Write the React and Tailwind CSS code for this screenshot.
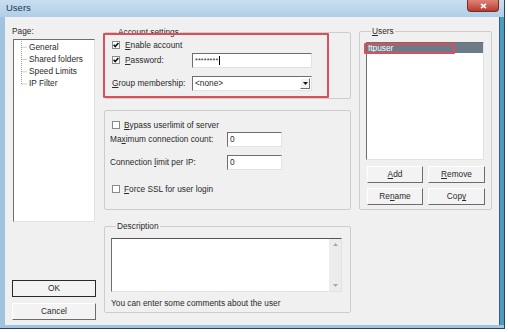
import React from 'react';

// Sunken edge used by text boxes, list boxes and the page tree.
const SUNKEN = 'border border-t-[#6e6e6e] border-l-[#6e6e6e] border-r-[#e2e2e2] border-b-[#e2e2e2]';
const RAISED = 'border border-t-[#ffffff] border-l-[#ffffff] border-r-[#6c6c6c] border-b-[#6c6c6c]';

function Check({ checked }) {
  return (
    <span className="w-[8px] h-[8px] shrink-0 flex items-center justify-center bg-white border border-[#8a8a8a]">
      {checked && (
        <svg width="6" height="6" viewBox="0 0 6 6">
          <path d="M0.6 2.8 L2.2 4.6 L5.4 0.9" stroke="#111" strokeWidth="1.6" fill="none" />
        </svg>
      )}
    </span>
  );
}

function Btn({ children, className = '' }) {
  return (
    <div className={`h-[17px] flex items-center justify-center bg-[#f3f3f3] ${RAISED} ${className}`}>
      {children}
    </div>
  );
}

function Legend({ children }) {
  return <legend className="ml-[5px] px-[1px] leading-[10px]">{children}</legend>;
}

export default function App() {
  return (
    <div className="w-[508px] h-[332px] bg-white font-['Liberation_Sans',Arial,sans-serif] text-[8.3px] leading-none text-[#2a2a2a]">
      <div className="w-[505px] h-[329px] flex flex-col border-r border-b border-[#2e4254] bg-[#a6c6e2]">
        {/* title bar */}
        <div className="h-[17px] shrink-0 flex items-start justify-between pl-[6px] pr-[5px] bg-gradient-to-b from-[#c9def0] to-[#b0cee7]">
          <span className="mt-[3px] text-[9.5px] leading-[10px] text-[#1c3a58]">Users</span>
          <div className="w-[32px] h-[12px] flex items-center justify-center rounded-b-[4px] border border-t-0 border-[#7a2c25] bg-gradient-to-b from-[#de8377] to-[#b73a2e]">
            <svg width="7" height="6" viewBox="0 0 7 6">
              <path d="M1 0.8 L6 5.2 M6 0.8 L1 5.2" stroke="#fff" strokeWidth="1.6" />
            </svg>
          </div>
        </div>

        <div className="flex-1 flex min-h-0">
          <div className="w-[5px] bg-[#a2c3df]" />
          <div className="flex-1 flex bg-[#f0f0f0] pl-[7px]">
            {/* left column */}
            <div className="w-[84px] flex flex-col pt-[9px] pb-[5px]">
              <div className="h-[10px] leading-[10px]">Page:</div>
              <div className={`mt-[3px] mx-[1px] h-[183px] bg-white ${SUNKEN} pl-[7px] pt-[0.5px]`}>
                <div className="flex">
                  <svg width="8" height="50" viewBox="0 0 8 50" className="shrink-0">
                    <path d="M0.5 0 V43 M0.5 6.2 H6 M0.5 18.5 H6 M0.5 30.8 H6 M0.5 43 H6"
                      stroke="#9a9a9a" strokeWidth="1" strokeDasharray="1 1" fill="none" />
                  </svg>
                  <div className="flex flex-col">
                    {['General', 'Shared folders', 'Speed Limits', 'IP Filter'].map(p => (
                      <div key={p} className="h-[12.3px] leading-[12.3px] whitespace-nowrap">{p}</div>
                    ))}
                  </div>
                </div>
              </div>
              <div className="mt-auto h-[17px] flex items-center justify-center bg-[#f3f3f3] border border-[#2a2a2a]">
                OK
              </div>
              <Btn className="mt-[6px]">Cancel</Btn>
            </div>

            {/* middle column */}
            <div className="relative ml-[8px] w-[247px] flex flex-col">
              <fieldset className="mt-[10px] border border-[#cdcdcd] rounded-[2px] pl-[7px] pt-[3px] pb-[7px]">
                <Legend>Account settings</Legend>
                <div className="h-[10px] flex items-center gap-[5px]">
                  <Check checked />
                  <span><u>E</u>nable account</span>
                </div>
                <div className="mt-[3px] h-[15px] flex items-center">
                  <div className="w-[80px] flex items-center gap-[5px]">
                    <Check checked />
                    <span><u>P</u>assword:</span>
                  </div>
                  <div className={`w-[120px] h-[15px] bg-white ${SUNKEN} flex items-center pl-[2px]`}>
                    <span className="text-[7px] tracking-[0.2px]">********</span>
                    <span className="ml-[1px] w-px h-[9px] bg-black" />
                  </div>
                </div>
                <div className="mt-[8px] h-[15px] flex items-center">
                  <span className="w-[80px]"><u>G</u>roup membership:</span>
                  <div className={`w-[120px] h-[15px] bg-white ${SUNKEN} flex items-center justify-between pl-[2px] pr-[1px]`}>
                    <span>&lt;none&gt;</span>
                    <div className={`w-[10px] h-[11px] flex items-center justify-center bg-[#f2f2f2] ${RAISED}`}>
                      <svg width="5" height="3" viewBox="0 0 5 3"><path d="M0 0 H5 L2.5 3 Z" fill="#111" /></svg>
                    </div>
                  </div>
                </div>
              </fieldset>

              <fieldset className="mt-[11px] border border-[#cdcdcd] rounded-[2px] pl-[5px] pt-[9px] pb-[15px]">
                <div className="h-[10px] flex items-center gap-[4px] pl-[2px]">
                  <Check />
                  <span><u>B</u>ypass userlimit of server</span>
                </div>
                <div className="mt-[2px] h-[15px] flex items-center">
                  <span className="w-[117px]">Ma<u>x</u>imum connection count:</span>
                  <div className={`w-[55px] h-[15px] bg-white ${SUNKEN} pl-[2px] flex items-center`}>0</div>
                </div>
                <div className="mt-[8px] h-[15px] flex items-center">
                  <span className="w-[117px]">Connection <u>l</u>imit per IP:</span>
                  <div className={`w-[55px] h-[15px] bg-white ${SUNKEN} pl-[2px] flex items-center`}>0</div>
                </div>
                <div className="mt-[14px] h-[10px] flex items-center gap-[4px] pl-[2px]">
                  <Check />
                  <span><u>F</u>orce SSL for user login</span>
                </div>
              </fieldset>

              <fieldset className="mt-[11px] border border-[#cdcdcd] rounded-[2px] pl-[6px] pr-[8px] pt-[7px] pb-[4px]">
                <Legend>Description</Legend>
                <div className={`h-[54px] bg-white ${SUNKEN} border-t-[#555] flex justify-end`}>
                  <div className="w-[12px] bg-[#ececec] flex flex-col items-center justify-between py-[4px]">
                    <svg width="5" height="3" viewBox="0 0 5 3"><path d="M0 3 H5 L2.5 0 Z" fill="#a8a8a8" /></svg>
                    <svg width="5" height="3" viewBox="0 0 5 3"><path d="M0 0 H5 L2.5 3 Z" fill="#a8a8a8" /></svg>
                  </div>
                </div>
                <div className="mt-[6px] h-[10px] leading-[10px] whitespace-nowrap">
                  You can enter some comments about the user
                </div>
              </fieldset>

              {/* red annotation */}
              <div className="absolute left-[-1px] top-[16px] w-[226px] h-[65px] border-2 border-[#d9505d] rounded-[1px] pointer-events-none" />
            </div>

            {/* right column */}
            <div className="ml-[8px] w-[133px] flex flex-col">
              <fieldset className="mt-[9px] border border-[#cdcdcd] rounded-[2px] pl-[6px] pt-[6px] pb-[4px]">
                <Legend><u>U</u>sers</Legend>
                <div className={`relative w-[118px] h-[118px] bg-white ${SUNKEN}`}>
                  <div className="h-[10px] bg-[#6d7a87] text-white pl-[1px] leading-[10px]">ftpuser</div>
                  <div className="absolute left-[-3px] top-0 w-[91px] h-[11px] border-2 border-[#d9505d] rounded-[1px]" />
                </div>
                <div className="mt-[6px] ml-[1px] flex gap-[5px]">
                  <Btn className="w-[56px]"><span><u>A</u>dd</span></Btn>
                  <Btn className="w-[57px]"><span><u>R</u>emove</span></Btn>
                </div>
                <div className="mt-[5px] ml-[1px] flex gap-[5px]">
                  <Btn className="w-[56px]"><span>Re<u>n</u>ame</span></Btn>
                  <Btn className="w-[57px]"><span>Cop<u>y</u></span></Btn>
                </div>
              </fieldset>
            </div>
          </div>
          <div className="w-[5px] bg-[#4e9bbf] border-l border-[#35607c]" />
        </div>
        <div className="h-[3px] shrink-0 bg-[#a2c3df]" />
      </div>
    </div>
  );
}
